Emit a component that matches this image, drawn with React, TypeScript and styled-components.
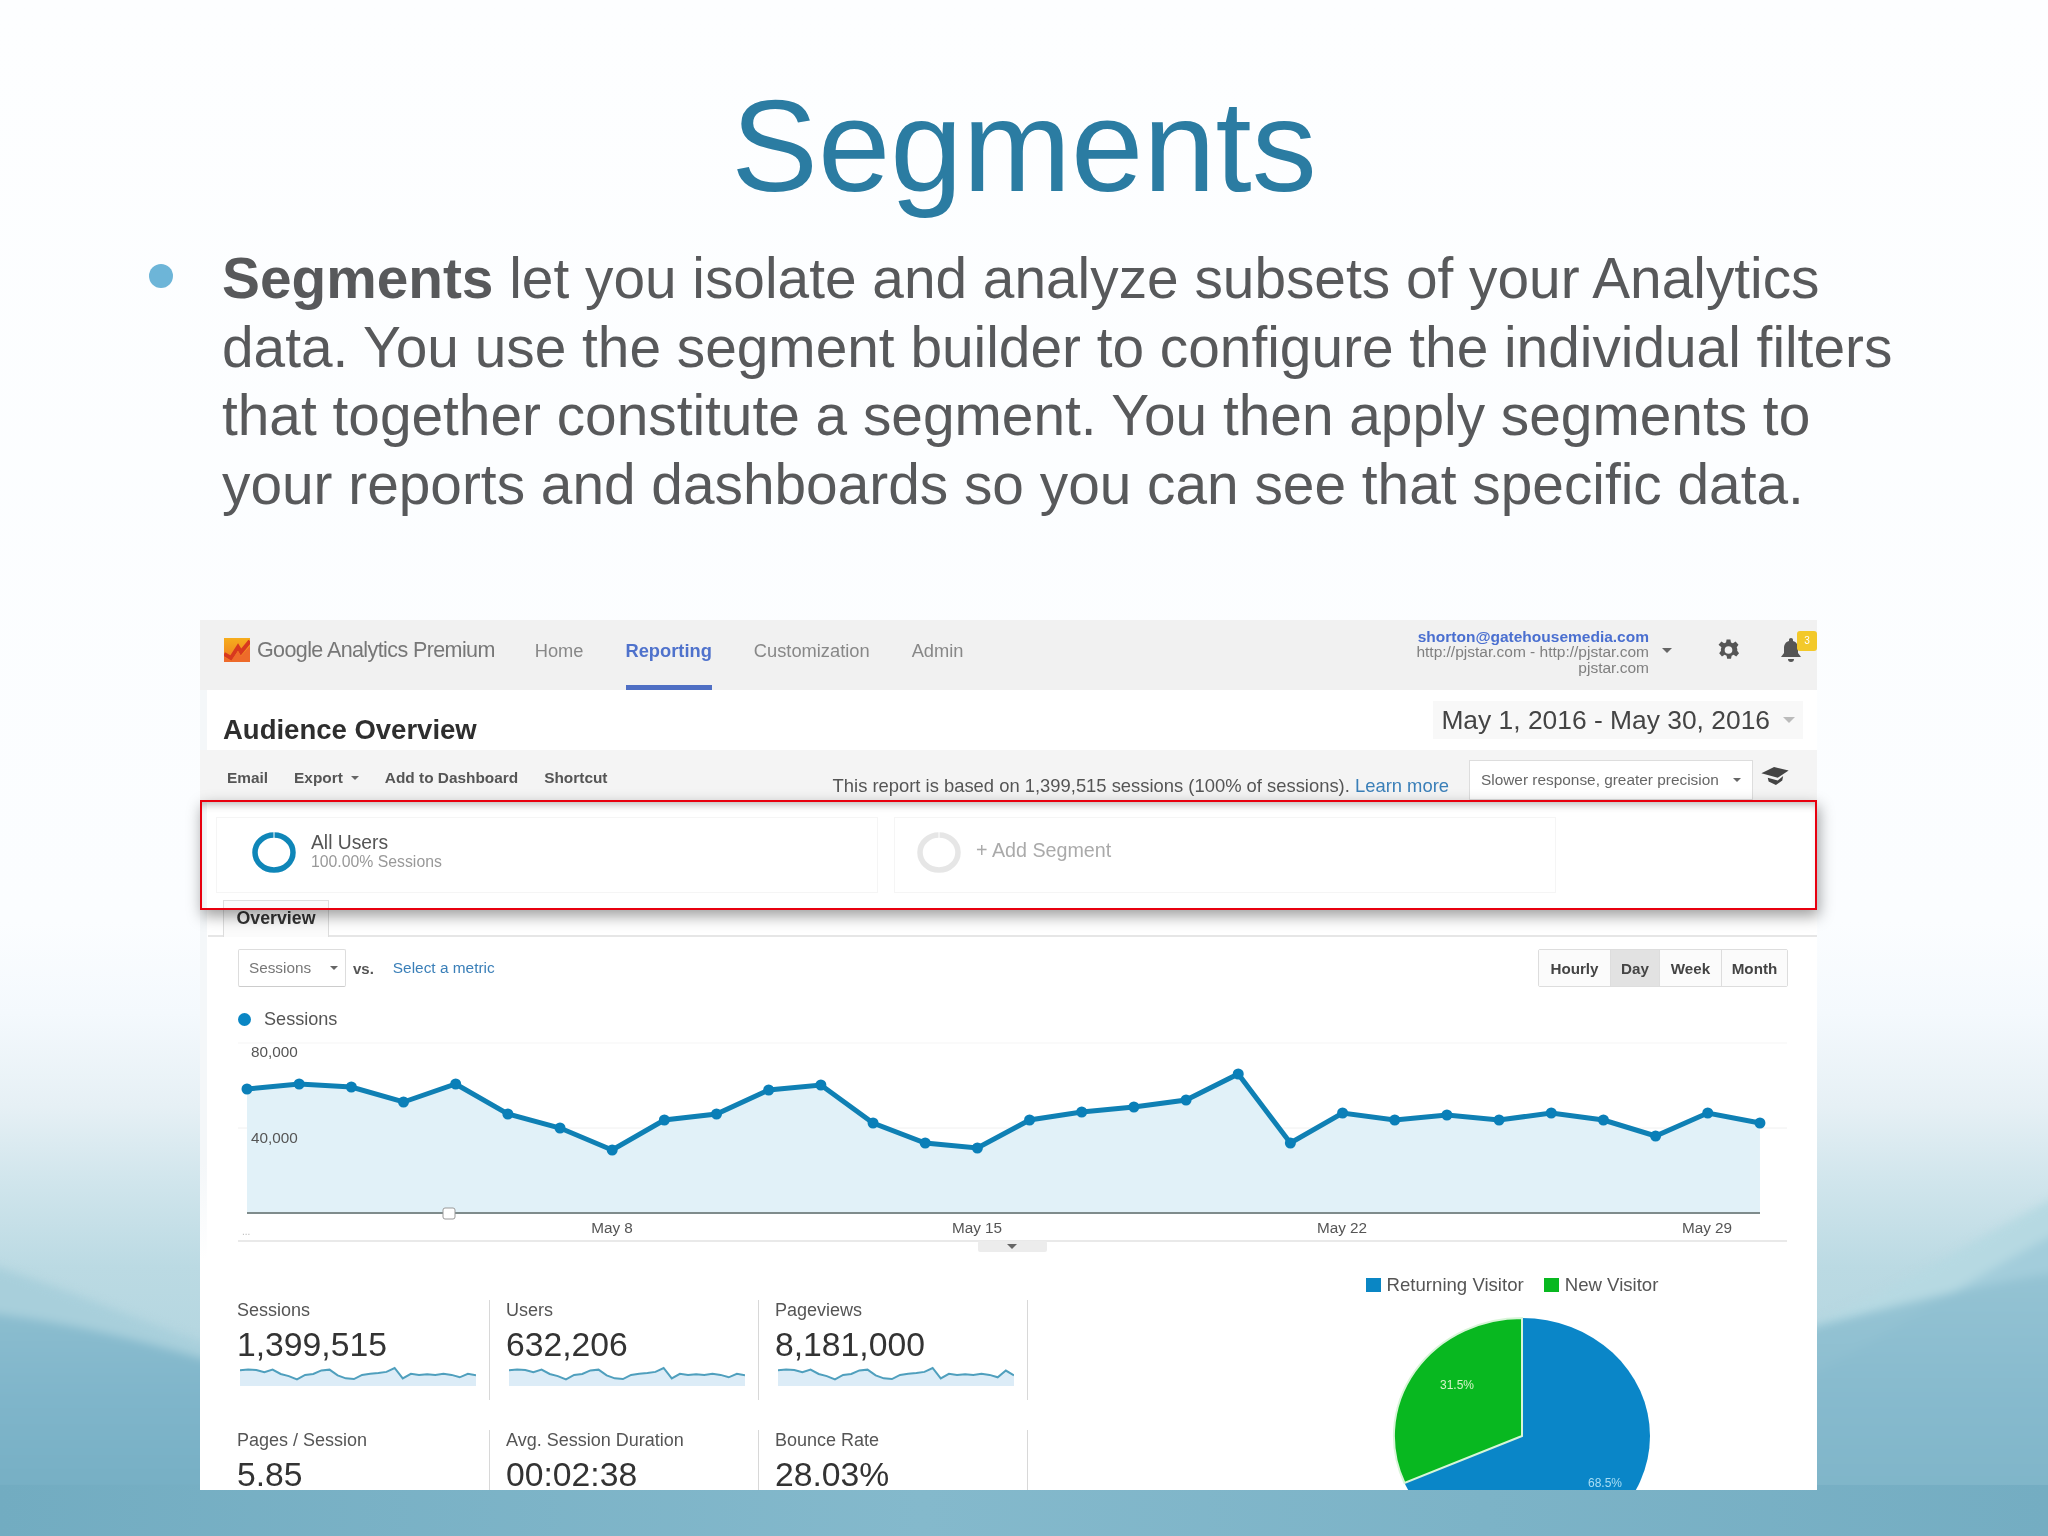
import styled, { createGlobalStyle } from "styled-components";

const GlobalStyle = createGlobalStyle`
  html, body {
    margin: 0;
    padding: 0;
    background: #fdfeff;
  }
  body {
    font-family: "Liberation Sans", Arial, sans-serif;
  }
`;

const sessions = [
  1089, 1084, 1087, 1102, 1084, 1114, 1128, 1150, 1120, 1114, 1090, 1085, 1123, 1143, 1148,
  1120, 1112, 1107, 1100, 1074, 1143, 1113, 1120, 1115, 1120, 1113, 1120, 1136, 1113, 1123,
];

const SlideStyled = styled.div`
  position: relative;
  display: flex;
  flex-direction: column;
  width: 2048px;
  height: 1536px;
  overflow: hidden;
`;

const BackdropStyled = styled.svg`
  position: absolute;
  inset: 0;
  width: 2048px;
  height: 1536px;
`;

const WavesStyled = styled.g`
  filter: blur(5px);
`;

const TitleStyled = styled.h1`
  position: relative;
  margin: 0;
  height: 245px;
  color: #2b7ca2;
  font-size: 130px;
  font-weight: 400;
  line-height: 292px;
  text-align: center;
`;

const BulletRowStyled = styled.div`
  position: relative;
  display: flex;
  height: 375px;
  padding-left: 149px;
`;

const BulletDotStyled = styled.span`
  flex: none;
  width: 24px;
  height: 24px;
  margin-top: 19px;
  margin-right: 49px;
  background: #6db5d8;
  border-radius: 50%;
`;

const BodyTextStyled = styled.p`
  margin: 0;
  color: #58595b;
  font-size: 56.8px;
  line-height: 68.5px;
  white-space: nowrap;
`;

const PanelWrapStyled = styled.div`
  position: relative;
  width: 1617px;
  height: 870px;
  margin-left: 200px;
`;

const PanelStyled = styled.div`
  width: 100%;
  height: 100%;
  overflow: hidden;
  background: linear-gradient(#f4f7f9 85%, #fff) 0 0 / 7px 640px no-repeat, #fff;
  filter: blur(0.6px);
`;

const TopBarStyled = styled.div`
  display: flex;
  align-items: center;
  box-sizing: border-box;
  height: 70px;
  padding: 0 0 10px 24px;
  background: #f1f1f1;
`;

const BrandStyled = styled.span`
  margin-left: 7px;
  color: #777;
  font-size: 21.5px;
  letter-spacing: -0.6px;
  white-space: nowrap;
`;

const NavStyled = styled.nav`
  display: flex;
  gap: 42px;
  margin-left: 40px;
  margin-bottom: -10px;
`;

const NavItemStyled = styled.span<{ $active?: boolean }>`
  display: flex;
  align-items: center;
  box-sizing: border-box;
  height: 70px;
  padding-bottom: 3px;
  color: ${({ $active }) => ($active ? "#4f72cc" : "#888")};
  font-size: 18.3px;
  font-weight: ${({ $active }) => ($active ? 700 : 400)};
  border-bottom: 5px solid ${({ $active }) => ($active ? "#4f6fc4" : "transparent")};
`;

const AccountStyled = styled.div`
  margin-left: auto;
  margin-top: 4px;
  color: #808080;
  font-size: 15.5px;
  line-height: 15.5px;
  text-align: right;
  white-space: nowrap;
`;

const AccountEmailStyled = styled.div`
  color: #4a6fd0;
  font-weight: 700;
`;

const CaretStyled = styled.span<{ $color?: string; $size?: number }>`
  display: inline-block;
  flex: none;
  width: 0;
  height: 0;
  border-top: ${({ $size = 5 }) => $size}px solid ${({ $color = "#666" }) => $color};
  border-left: ${({ $size = 5 }) => $size}px solid transparent;
  border-right: ${({ $size = 5 }) => $size}px solid transparent;
`;

const AccountCaretStyled = styled(CaretStyled)`
  margin-left: 13px;
`;

const TopIconsStyled = styled.div`
  position: relative;
  display: flex;
  align-items: center;
  gap: 40px;
  margin-left: 45px;
  margin-right: 15px;
`;

const BadgeStyled = styled.span`
  position: absolute;
  top: -6px;
  right: -15px;
  width: 20px;
  height: 20px;
  color: #fff;
  font-size: 10px;
  line-height: 20px;
  text-align: center;
  background: #f3c92a;
  border-radius: 3px;
`;

const HeaderRowStyled = styled.div`
  display: flex;
  align-items: center;
  justify-content: space-between;
  height: 60px;
  padding: 0 14px 0 23px;
`;

const PageTitleStyled = styled.h2`
  margin: 20px 0 0;
  color: #2e2e2e;
  font-size: 27.5px;
  font-weight: 700;
`;

const DateBoxStyled = styled.div`
  display: flex;
  align-items: center;
  gap: 13px;
  height: 38px;
  padding: 0 8px;
  color: #444;
  font-size: 26.4px;
  white-space: nowrap;
  background: #f8f8f8;
`;

const ToolbarStyled = styled.div`
  display: flex;
  align-items: flex-start;
  height: 50px;
  padding: 0 27px 0 27px;
  background: #f4f4f4;
`;

const ToolLinksStyled = styled.div`
  display: flex;
  align-items: center;
  gap: 26px;
  height: 56px;
  color: #555;
  font-size: 15.4px;
  font-weight: 700;
`;

const ToolLinkStyled = styled.span`
  display: flex;
  align-items: center;
  gap: 8px;
`;

const ReportNoteStyled = styled.span`
  margin-left: auto;
  margin-top: 25px;
  color: #555;
  font-size: 18.4px;
  white-space: nowrap;
`;

const LinkStyled = styled.span`
  color: #3a7fb8;
`;

const PrecisionSelectStyled = styled.div`
  display: flex;
  flex: none;
  align-items: center;
  justify-content: space-between;
  box-sizing: border-box;
  width: 284px;
  height: 40px;
  margin-left: 20px;
  margin-top: 10px;
  padding: 0 11px;
  color: #666;
  font-size: 15.4px;
  white-space: nowrap;
  background: #fff;
  border: 1px solid #ddd;
`;

const CapIconStyled = styled.svg`
  flex: none;
  margin-top: 16px;
  margin-left: 7px;
`;

const SegmentRowStyled = styled.div`
  display: flex;
  gap: 16px;
  height: 100px;
  padding: 17px 0 0 16px;
  box-sizing: border-box;
`;

const SegmentCardStyled = styled.div<{ $inset: number }>`
  display: flex;
  align-items: center;
  gap: 15px;
  box-sizing: border-box;
  width: 662px;
  height: 76px;
  padding: 0 0 6px ${({ $inset }) => $inset}px;
  border: 1px solid #f5f5f5;
`;

const SegmentNameStyled = styled.div`
  color: #555;
  font-size: 19.3px;
  line-height: 20px;
`;

const SegmentSubStyled = styled.div`
  color: #999;
  font-size: 15.8px;
  line-height: 18px;
`;

const AddSegmentStyled = styled.span`
  margin-bottom: 4px;
  color: #aaa;
  font-size: 19.7px;
`;

const TabRowStyled = styled.div`
  display: flex;
  height: 35px;
  margin-left: 8px;
  padding-left: 15px;
  border-bottom: 2px solid #e6e6e6;
`;

const TabStyled = styled.div`
  box-sizing: border-box;
  width: 106px;
  height: 37px;
  color: #333;
  font-size: 17.8px;
  font-weight: 700;
  line-height: 35px;
  text-align: center;
  background: #fbfbfb;
  border: 1px solid #ddd;
  border-bottom: 0;
`;

const MetricRowStyled = styled.div`
  display: flex;
  align-items: center;
  height: 38px;
  margin-top: 12px;
  padding: 0 29px 0 38px;
`;

const MetricSelectStyled = styled.div`
  display: flex;
  align-items: center;
  justify-content: space-between;
  box-sizing: border-box;
  width: 108px;
  height: 38px;
  padding: 0 7px 0 10px;
  color: #777;
  font-size: 15.3px;
  border: 1px solid #ddd;
  border-bottom-color: #ccc;
  border-radius: 2px;
`;

const VersusStyled = styled.span`
  margin-left: 7px;
  color: #555;
  font-size: 15px;
  font-weight: 700;
`;

const SelectMetricStyled = styled.span`
  margin-left: 19px;
  color: #3a7fb8;
  font-size: 15.4px;
`;

const RangeGroupStyled = styled.div`
  display: flex;
  margin-left: auto;
  border: 1px solid #ddd;
  border-radius: 2px;
`;

const RangeButtonStyled = styled.div<{ $active?: boolean; $width: number }>`
  box-sizing: border-box;
  width: ${({ $width }) => $width}px;
  height: 36px;
  color: #444;
  font-size: 15.2px;
  font-weight: 700;
  line-height: 37px;
  text-align: center;
  background: ${({ $active }) => ($active ? "#e2e2e2" : "#fbfbfb")};
  border-left: 1px solid #ddd;

  &:first-child {
    border-left: 0;
  }
`;

const LegendRowStyled = styled.div`
  display: flex;
  align-items: center;
  gap: 13px;
  height: 20px;
  margin-top: 22px;
  padding-left: 38px;
  color: #555;
  font-size: 18.1px;
`;

const LegendDotStyled = styled.span`
  width: 13px;
  height: 13px;
  background: #0a86c4;
  border-radius: 50%;
`;

const ChartSvgStyled = styled.svg`
  display: block;
  margin-top: 1px;
`;

const LowerStyled = styled.div`
  display: flex;
  justify-content: space-between;
  height: 250px;
`;

const StatsGridStyled = styled.div`
  display: grid;
  grid-template-columns: repeat(3, 269px);
  grid-auto-rows: 130px;
  margin-left: 21px;
  margin-top: 38px;
`;

const StatStyled = styled.div`
  box-sizing: border-box;
  height: 100px;
  padding-left: 16px;
  border-right: 1px solid #d8d8d8;
`;

const StatLabelStyled = styled.div`
  padding-top: 1px;
  color: #555;
  font-size: 18px;
  line-height: 18px;
`;

const StatValueStyled = styled.div`
  margin-top: 8px;
  color: #333;
  font-size: 33.7px;
  line-height: 34px;
`;

const SparkStyled = styled.svg`
  display: block;
  margin-top: 2px;
  margin-left: 3px;
`;

const PieColumnStyled = styled.div`
  display: flex;
  flex-direction: column;
  align-items: center;
  width: 420px;
  margin-right: 85px;
  padding-top: 13px;
`;

const PieLegendStyled = styled.div`
  display: flex;
  flex: none;
  align-items: center;
  gap: 6px;
  height: 20px;
  margin-right: 20px;
  color: #555;
  font-size: 18.6px;
  white-space: nowrap;
`;

const PieSwatchStyled = styled.span<{ $color: string }>`
  width: 15px;
  height: 14px;
  margin-left: ${({ $color }) => ($color === "#08b820" ? "14px" : "0")};
  background: ${({ $color }) => $color};
`;

const PieStyled = styled.svg`
  display: block;
  flex: none;
  margin-top: 21px;
`;

const RedBoxStyled = styled.div`
  position: absolute;
  top: 180px;
  left: 0;
  right: 0;
  box-sizing: border-box;
  height: 110px;
  border: 2.5px solid #e8000f;
  box-shadow:
    2px 6px 14px rgba(0, 0, 0, 0.38),
    inset 0 7px 8px -5px rgba(0, 0, 0, 0.3);
`;

const Ring = ({ color }: { color: string }) => (
  <svg width="44" height="41" viewBox="0 0 44 41">
    <ellipse cx="22" cy="20.5" rx="19" ry="17.5" fill="none" stroke={color} strokeWidth="5.5" />
    <line x1="22" x2="22" y1="0" y2="6" stroke="#fff" strokeWidth="1" />
  </svg>
);

const Logo = () => (
  <svg width="26" height="24" viewBox="0 0 26 24">
    <defs>
      <linearGradient id="logoFill" x1="0" y1="0" x2="0" y2="1">
        <stop offset="0" stopColor="#f6ad1c" />
        <stop offset="1" stopColor="#ee7a22" />
      </linearGradient>
    </defs>
    <rect width="26" height="24" fill="url(#logoFill)" />
    <path d="M0 16 L7 20 L14 9 L17 14 L26 3" fill="none" stroke="#d8381f" strokeWidth="4" />
    <path d="M0 19 L7 23 L14 13 L17 18 L26 8 V24 H0 Z" fill="#ee6a2a" />
  </svg>
);

const Gear = () => (
  <svg width="23" height="26" viewBox="0 0 24 24">
    <path
      fill="#555"
      fillRule="evenodd"
      d="M10 1h4l.6 3.2 2 .8L19.4 3l3 3.4-1.8 2.7.6 2-.1 1.8 1.9 2.6-2.9 3.4-2.8-1.9-2 .9-.7 3.1h-4l-.6-3.1-2-.9-2.8 1.9-2.9-3.4 1.9-2.6-.2-1.8.6-2L1.600 6.400l3-3.400L7.400 5l2-.8L10 1zm2 7a4 4 0 1 0 0 8 4 4 0 0 0 0-8z"
    />
  </svg>
);

const Bell = () => (
  <svg width="22" height="26" viewBox="0 0 22 26">
    <path fill="#555" d="M11 1c1.2 0 2 .8 2 2v1c3.500 1 5 4 5 7v5l3 4H1l3-4v-5c0-3 1.500-6 5-7V3c0-1.200.8-2 2-2z" />
    <path fill="#555" d="M8 22h6a3 3 0 0 1-6 0z" />
  </svg>
);

const chartPoints = sessions.map((y, i) => ({ x: 47 + i * 52.17, y: y - 1030 }));
const chartLine = chartPoints.map((p) => `${p.x},${p.y}`).join(" ");

const Spark = ({ peak }: { peak?: boolean }) => {
  const points = sessions.map((y, i) => {
    const lift = peak && i === 28 ? 22 : 0;
    return `${(i / 29) * 236},${5 + (y - 1074 - lift) * 0.15}`;
  });
  return (
    <SparkStyled width="236" height="23" viewBox="0 0 236 23">
      <polygon points={`0,23 ${points.join(" ")} 236,23`} fill="#dcecf7" />
      <polyline points={points.join(" ")} fill="none" stroke="#4f9fbd" strokeWidth="2" />
    </SparkStyled>
  );
};

const stats = [
  { label: "Sessions", value: "1,399,515", spark: "plain" },
  { label: "Users", value: "632,206", spark: "plain" },
  { label: "Pageviews", value: "8,181,000", spark: "peak" },
  { label: "Pages / Session", value: "5.85" },
  { label: "Avg. Session Duration", value: "00:02:38" },
  { label: "Bounce Rate", value: "28.03%" },
];

const ranges = [
  { name: "Hourly", width: 71 },
  { name: "Day", width: 49, active: true },
  { name: "Week", width: 62 },
  { name: "Month", width: 66 },
];

export default function App() {
  return (
    <SlideStyled>
      <GlobalStyle />
      <BackdropStyled viewBox="0 0 2048 1536" preserveAspectRatio="none">
        <defs>
          <linearGradient id="skyFill" x1="0" y1="0" x2="0" y2="1">
            <stop offset="0" stopColor="#fdfeff" />
            <stop offset="0.6" stopColor="#fbfdff" />
            <stop offset="0.66" stopColor="#f4f9fd" />
            <stop offset="0.72" stopColor="#e6f0f5" />
            <stop offset="0.77" stopColor="#d0e5ec" />
            <stop offset="0.825" stopColor="#bbdae3" />
            <stop offset="1" stopColor="#a5cdd9" />
          </linearGradient>
          <linearGradient id="waveFill" gradientUnits="userSpaceOnUse" x1="0" y1="1260" x2="0" y2="1536">
            <stop offset="0" stopColor="#93c2d2" />
            <stop offset="0.5" stopColor="#7fb5ca" />
            <stop offset="1" stopColor="#72acc1" />
          </linearGradient>
          <linearGradient id="footFill" x1="0" y1="0" x2="1" y2="0">
            <stop offset="0" stopColor="#72acc1" />
            <stop offset="0.45" stopColor="#84b9cc" />
            <stop offset="1" stopColor="#74adc2" />
          </linearGradient>
        </defs>
        <rect width="2048" height="1536" fill="url(#skyFill)" />
        <WavesStyled>
          <path d="M-20 1262 C60 1285 130 1318 220 1348 V1560 H-20 Z" fill="#a8cfdb" />
          <path d="M-20 1312 C70 1322 140 1340 220 1364 V1560 H-20 Z" fill="url(#waveFill)" />
          <path d="M1800 1328 C1900 1290 1980 1235 2070 1190 V1560 H1800 Z" fill="#b6d9e2" />
          <path d="M1800 1382 C1900 1330 1980 1270 2070 1227 V1560 H1800 Z" fill="#a3cddb" />
          <path d="M1800 1330 C1880 1310 1960 1288 2070 1270 V1560 H1800 Z" fill="url(#waveFill)" opacity="0.8" />
        </WavesStyled>
        <rect y="1485" width="2048" height="51" fill="url(#footFill)" />
      </BackdropStyled>

      <TitleStyled>Segments</TitleStyled>

      <BulletRowStyled>
        <BulletDotStyled />
        <BodyTextStyled>
          <strong>Segments</strong> let you isolate and analyze subsets of your Analytics
          <br />
          data. You use the segment builder to configure the individual filters
          <br />
          that together constitute a segment. You then apply segments to
          <br />
          your reports and dashboards so you can see that specific data.
        </BodyTextStyled>
      </BulletRowStyled>

      <PanelWrapStyled>
        <PanelStyled>
          <TopBarStyled>
            <Logo />
            <BrandStyled>Google Analytics Premium</BrandStyled>
            <NavStyled>
              <NavItemStyled>Home</NavItemStyled>
              <NavItemStyled $active>Reporting</NavItemStyled>
              <NavItemStyled>Customization</NavItemStyled>
              <NavItemStyled>Admin</NavItemStyled>
            </NavStyled>
            <AccountStyled>
              <AccountEmailStyled>shorton@gatehousemedia.com</AccountEmailStyled>
              <div>http://pjstar.com - http://pjstar.com</div>
              <div>pjstar.com</div>
            </AccountStyled>
            <AccountCaretStyled />
            <TopIconsStyled>
              <Gear />
              <Bell />
              <BadgeStyled>3</BadgeStyled>
            </TopIconsStyled>
          </TopBarStyled>

          <HeaderRowStyled>
            <PageTitleStyled>Audience Overview</PageTitleStyled>
            <DateBoxStyled>
              May 1, 2016 - May 30, 2016
              <CaretStyled $color="#bbb" $size={6} />
            </DateBoxStyled>
          </HeaderRowStyled>

          <ToolbarStyled>
            <ToolLinksStyled>
              <ToolLinkStyled>Email</ToolLinkStyled>
              <ToolLinkStyled>
                Export <CaretStyled $size={4} />
              </ToolLinkStyled>
              <ToolLinkStyled>Add to Dashboard</ToolLinkStyled>
              <ToolLinkStyled>Shortcut</ToolLinkStyled>
            </ToolLinksStyled>
            <ReportNoteStyled>
              This report is based on 1,399,515 sessions (100% of sessions). <LinkStyled>Learn more</LinkStyled>
            </ReportNoteStyled>
            <PrecisionSelectStyled>
              Slower response, greater precision
              <CaretStyled $size={4} />
            </PrecisionSelectStyled>
            <CapIconStyled width="30" height="20" viewBox="0 0 30 22">
              <path fill="#444" d="M14 1 L30 5 L18 13 L0 8 Z" />
              <path fill="#444" d="M7 13 L18 16 L24 11 L23 16 L16 21 L8 17 Z" />
            </CapIconStyled>
          </ToolbarStyled>

          <SegmentRowStyled>
            <SegmentCardStyled $inset={35}>
              <Ring color="#0f86b8" />
              <div>
                <SegmentNameStyled>All Users</SegmentNameStyled>
                <SegmentSubStyled>100.00% Sessions</SegmentSubStyled>
              </div>
            </SegmentCardStyled>
            <SegmentCardStyled $inset={22}>
              <Ring color="#e6e6e6" />
              <AddSegmentStyled>+ Add Segment</AddSegmentStyled>
            </SegmentCardStyled>
          </SegmentRowStyled>

          <TabRowStyled>
            <TabStyled>Overview</TabStyled>
          </TabRowStyled>

          <MetricRowStyled>
            <MetricSelectStyled>
              Sessions
              <CaretStyled $size={4} />
            </MetricSelectStyled>
            <VersusStyled>vs.</VersusStyled>
            <SelectMetricStyled>Select a metric</SelectMetricStyled>
            <RangeGroupStyled>
              {ranges.map((range) => (
                <RangeButtonStyled key={range.name} $width={range.width} $active={range.active}>
                  {range.name}
                </RangeButtonStyled>
              ))}
            </RangeGroupStyled>
          </MetricRowStyled>

          <LegendRowStyled>
            <LegendDotStyled />
            Sessions
          </LegendRowStyled>

          <ChartSvgStyled width="1617" height="232" viewBox="0 0 1617 232">
            <line x1="38" x2="1587" y1="13" y2="13" stroke="#f5f5f5" />
            <line x1="38" x2="1587" y1="98" y2="98" stroke="#f0f0f0" />
            <polygon points={`47,183 ${chartLine} 1560,183`} fill="#e1f1f8" />
            <polyline points={chartLine} fill="none" stroke="#0f80b4" strokeWidth="5" />
            {chartPoints.map((p) => (
              <circle key={p.x} cx={p.x} cy={p.y} r="5.500" fill="#0a7fb8" />
            ))}
            <line x1="47" x2="1560" y1="183" y2="183" stroke="#7f8c8c" strokeWidth="2" />
            <rect x="243" y="178" width="12" height="11" rx="2" fill="#fff" stroke="#999" />
            <g fill="#555" fontSize="15.300" fontFamily="'Liberation Sans', Arial, sans-serif">
              <text x="51" y="27">80,000</text>
              <text x="51" y="113">40,000</text>
              <text x="412" y="203" textAnchor="middle">May 8</text>
              <text x="777" y="203" textAnchor="middle">May 15</text>
              <text x="1142" y="203" textAnchor="middle">May 22</text>
              <text x="1507" y="203" textAnchor="middle">May 29</text>
              <text x="42" y="205" fill="#bbb" fontSize="10">...</text>
            </g>
            <line x1="38" x2="1587" y1="211" y2="211" stroke="#e2e2e2" strokeWidth="1.500" />
            <rect x="778" y="211" width="69" height="11" rx="2" fill="#ececec" />
            <path d="M807 214 h10 l-5 5 z" fill="#666" />
          </ChartSvgStyled>

          <LowerStyled>
            <StatsGridStyled>
              {stats.map((stat) => (
                <StatStyled key={stat.label}>
                  <StatLabelStyled>{stat.label}</StatLabelStyled>
                  <StatValueStyled>{stat.value}</StatValueStyled>
                  {stat.spark && <Spark peak={stat.spark === "peak"} />}
                </StatStyled>
              ))}
            </StatsGridStyled>
            <PieColumnStyled>
              <PieLegendStyled>
                <PieSwatchStyled $color="#0a86c4" />
                Returning Visitor
                <PieSwatchStyled $color="#08b820" />
                New Visitor
              </PieLegendStyled>
              <PieStyled width="260" height="240" viewBox="0 0 260 240">
                <ellipse cx="130" cy="120" rx="128" ry="118" fill="#0a86c8" />
                <path d="M130 120 V2 A128 118 0 0 0 12.500 167 Z" fill="#08b820" stroke="#d8f5d8" strokeWidth="2" />
                <text x="48" y="73" fill="#d6f5c8" fontSize="12" fontFamily="'Liberation Sans', Arial, sans-serif">
                  31.5%
                </text>
                <text x="196" y="171" fill="#a8def5" fontSize="12" fontFamily="'Liberation Sans', Arial, sans-serif">
                  68.5%
                </text>
              </PieStyled>
            </PieColumnStyled>
          </LowerStyled>
        </PanelStyled>
        <RedBoxStyled />
      </PanelWrapStyled>
    </SlideStyled>
  );
}
